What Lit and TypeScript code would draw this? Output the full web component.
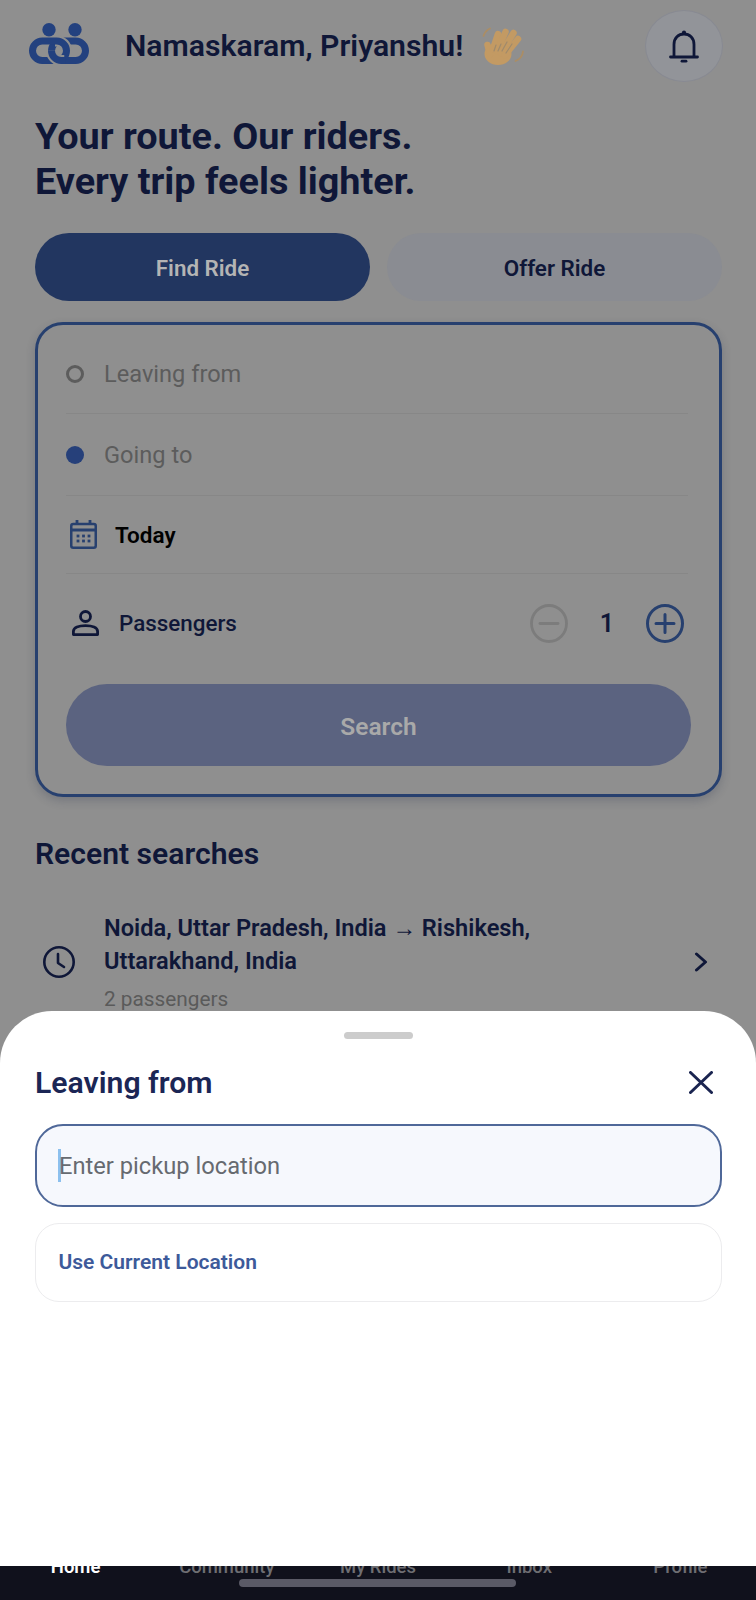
import { LitElement, html, css, svg } from "lit";
import { customElement } from "lit/decorators.js";

const navy = "#0f1738";
const blue = "#27406f";
const logoBlue = "#23417f";
const pageBg = "#8f8f8f";

const logo = html`<svg class="logo" viewBox="0 0 60 41" width="60" height="41" fill="none">
  <circle cx="20" cy="6.700" r="6.700" fill="${logoBlue}" />
  <circle cx="46" cy="6.700" r="6.700" fill="${logoBlue}" />
  <rect x="22.500" y="18" width="34" height="19.500" rx="9.750" stroke="${logoBlue}" stroke-width="7" />
  <path d="M26 18h2a9.750 9.750 0 0 1 9.500 9.750" stroke="${pageBg}" stroke-width="11" />
  <rect x="3.500" y="18" width="34" height="19.500" rx="9.750" stroke="${logoBlue}" stroke-width="7" />
  <path d="M22.500 27.750a9.750 9.750 0 0 0 9.750 9.750h3" stroke="${pageBg}" stroke-width="11" />
  <path d="M22.500 27.750a9.750 9.750 0 0 0 9.750 9.750h4" stroke="${logoBlue}" stroke-width="7" />
</svg>`;

const hand = html`<svg class="hand" viewBox="0 0 42 38" width="42" height="38" fill="none" stroke-linecap="round">
  <ellipse cx="16" cy="27" rx="13.500" ry="11" fill="#c39a63" />
  <g stroke="#c39a63" stroke-width="6.500">
    <path d="M8 27L5.500 18" />
    <path d="M11 22L16 7" />
    <path d="M15 24L23.500 5" />
    <path d="M19 26L31.500 6" />
    <path d="M23 28L36 12" />
  </g>
  <path d="M14 18l-2 6M19 17l-3 7M25 15l-5 9M30 17l-6 9" stroke="#9f8a6c" stroke-width="1.200" />
  <path d="M1.500 9c1-3.500 3.500-6 6.500-7.500M33.500 34c4-1.500 7-5 7.500-9.500" stroke="#ab8d64" stroke-width="1.800" />
</svg>`;

const bell = html`<svg viewBox="0 0 30 33" width="30" height="33" fill="none" stroke="${navy}" stroke-width="2.800" stroke-linejoin="round" stroke-linecap="round">
  <path d="M5 26V14.500C5 8 9.500 4 15 4s10 4 10 10.500V26" />
  <path d="M1.500 27h27" />
  <circle cx="15" cy="2.600" r="1.300" fill="${navy}" stroke-width="1.500" />
  <path d="M13 31.200h4" stroke-width="2.800" />
</svg>`;

const calendar = html`<svg viewBox="0 0 27 29" width="27" height="29" fill="none" stroke="${blue}" stroke-width="2.500">
  <rect x="1.250" y="4" width="24.500" height="23.700" rx="2" />
  <path d="M1.500 10h24" stroke-width="3" />
  <path d="M7 0v5M20 0v5" stroke-width="2.800" />
  ${[16, 21].map((y) =>
    [8, 13.500, 19].map(
      (x) => svg`<rect x=${x - 1.400} y=${y - 1.400} width="2.800" height="2.800" fill=${blue} stroke="none" />`,
    ),
  )}
</svg>`;

const person = html`<svg viewBox="0 0 27 26" width="27" height="26" fill="none" stroke="${navy}" stroke-width="2.800">
  <circle cx="13.500" cy="6.500" r="5" />
  <path d="M1.400 24.600v-3c0-4 5.400-6 12.100-6s12.100 2 12.100 6v3z" stroke-linejoin="round" />
</svg>`;

const minus = html`<svg viewBox="0 0 38 39" width="38" height="39" fill="none" stroke="#7c7c7c" stroke-width="2.800">
  <ellipse cx="19" cy="19.500" rx="17.500" ry="18" />
  <path d="M10 19.500h18" stroke-linecap="round" />
</svg>`;

const plus = html`<svg viewBox="0 0 38 39" width="38" height="39" fill="none" stroke="${blue}" stroke-width="3">
  <ellipse cx="19" cy="19.500" rx="17.500" ry="18" />
  <path d="M10 19.500h18M19 10.500v18" stroke-linecap="round" />
</svg>`;

const clock = html`<svg class="clock" viewBox="0 0 32 32" width="32" height="32" fill="none" stroke="${navy}" stroke-width="2.600" stroke-linecap="round" stroke-linejoin="round">
  <circle cx="16" cy="16" r="14.700" />
  <path d="M15 8v9l6 4" />
</svg>`;

const chevron = html`<svg class="chevron" viewBox="0 0 14 20" width="14" height="20" fill="none" stroke="${navy}" stroke-width="3" stroke-linecap="round" stroke-linejoin="round">
  <path d="M2.500 2l9 8-9 8" />
</svg>`;

const close = html`<svg viewBox="0 0 24 23" width="24" height="23" fill="none" stroke="#1a2450" stroke-width="3" stroke-linecap="round">
  <path d="M1.500 1.500l21 20M22.500 1.500l-21 20" />
</svg>`;

@customElement("app-root")
export class AppRoot extends LitElement {
  static styles = css`
    :host {
      display: block;
      position: relative;
      width: 756px;
      height: 1600px;
      overflow: hidden;
      background: #8f8f8f;
      font-family: Roboto, "Liberation Sans", sans-serif;
      color: #0f1738;
    }

    .header {
      display: flex;
      align-items: center;
      padding: 10px 33px 0 29px;
    }
    .logo {
      margin: -6px 36px 0 0;
      flex: none;
    }
    .greeting {
      font-size: 30.200px;
      font-weight: 600;
      line-height: 36px;
      white-space: nowrap;
    }
    .hand {
      margin-left: 19px;
    }
    .bell {
      margin-left: auto;
      width: 78px;
      height: 72px;
      box-sizing: border-box;
      border-radius: 50%;
      background: #929499;
      border: 1px solid #888a92;
      display: flex;
      align-items: center;
      justify-content: center;
    }

    .main {
      padding: 0 34px 0 35px;
    }
    .headline {
      margin: 32px 0 0;
      font-size: 37.800px;
      font-weight: 700;
      line-height: 45px;
      white-space: nowrap;
    }

    .tabs {
      display: grid;
      grid-template-columns: 1fr 1fr;
      gap: 17px;
      margin-top: 29px;
    }
    .tab {
      height: 68px;
      padding-top: 1px;
      box-sizing: border-box;
      border-radius: 34px;
      display: flex;
      align-items: center;
      justify-content: center;
      font-size: 22.400px;
      font-weight: 600;
    }
    .tab.active {
      background: #223660;
      color: #b4b4b4;
    }
    .tab.idle {
      background: #8a8c92;
      color: #0f1738;
    }

    .card {
      margin-top: 21px;
      height: 475px;
      box-sizing: border-box;
      border: 3px solid #27406f;
      border-radius: 28px;
      padding: 9px 28px 28px;
      box-shadow: 0 4px 10px rgba(30, 40, 70, 0.22);
    }
    .row {
      display: flex;
      align-items: center;
      margin-right: 3px;
      border-bottom: 1px solid #878787;
      box-sizing: border-box;
      font-size: 23.600px;
      color: #5c5c5c;
    }
    .row.from {
      height: 80px;
    }
    .row.to {
      height: 82px;
    }
    .row.date {
      height: 78px;
      padding-left: 4px;
      color: #000;
      font-size: 22.500px;
      font-weight: 600;
    }
    .row.pax {
      height: 98px;
      padding: 0 4px 0 6px;
      border-bottom: none;
      font-size: 22.400px;
      font-weight: 500;
      color: #0f1738;
    }
    .dot {
      width: 18px;
      height: 18px;
      box-sizing: border-box;
      border-radius: 50%;
      margin-right: 20px;
    }
    .dot.ring {
      border: 3.500px solid #5c5c5c;
    }
    .dot.solid {
      background: #26407a;
    }
    .date svg {
      margin-right: 18px;
    }
    .pax .person {
      margin-right: 20px;
      display: flex;
    }
    .stepper {
      margin-left: auto;
      display: flex;
      align-items: center;
    }
    .count {
      width: 78px;
      text-align: center;
      font-size: 25px;
      font-weight: 600;
    }
    .search {
      margin-top: 12px;
      height: 82px;
      padding-top: 2px;
      box-sizing: border-box;
      border-radius: 41px;
      background: #5b6380;
      color: #a9a9a9;
      font-size: 24.500px;
      font-weight: 600;
      display: flex;
      align-items: center;
      justify-content: center;
    }

    .recent-title {
      margin: 39px 0 0;
      font-size: 30.100px;
      font-weight: 600;
      line-height: 36px;
    }
    .recent {
      display: flex;
      align-items: center;
      margin-top: 40px;
      padding: 0 14px 0 8px;
    }
    .recent-text {
      margin-left: 29px;
      width: 470px;
      font-size: 23.600px;
      font-weight: 600;
      line-height: 33px;
    }
    .recent-sub {
      margin-top: 6px;
      font-size: 20.800px;
      font-weight: 400;
      line-height: 30px;
      color: #5a5a5a;
    }
    .chevron {
      margin: 0 0 2px auto;
    }
    .clock {
      margin-bottom: 2px;
    }

    .nav {
      position: absolute;
      left: 0;
      right: 0;
      bottom: 0;
      height: 70px;
      padding-top: 26px;
      box-sizing: border-box;
      background: #10111c;
      display: grid;
      grid-template-columns: repeat(5, 1fr);
      justify-items: center;
      font-size: 18.500px;
      line-height: 22px;
      font-weight: 500;
      color: #6e6e72;
    }
    .nav .on {
      color: #fff;
      font-weight: 600;
    }
    .home-bar {
      position: absolute;
      left: 239px;
      top: 49px;
      width: 277px;
      height: 8px;
      border-radius: 4px;
      background: #5a5a66;
    }

    .sheet {
      position: absolute;
      left: 0;
      right: 0;
      top: 1011px;
      height: 555px;
      box-sizing: border-box;
      padding: 21px 34px 0 35px;
      background: #fff;
      border-radius: 52px 52px 0 0;
    }
    .handle {
      width: 69px;
      height: 7px;
      border-radius: 4px;
      background: #cccccc;
      margin: 0 auto;
    }
    .sheet-head {
      display: flex;
      align-items: center;
      justify-content: space-between;
      margin-top: 25px;
      padding-right: 9px;
      height: 36px;
      font-size: 30.200px;
      font-weight: 600;
      color: #1b2655;
    }
    .input {
      margin-top: 24px;
      height: 83px;
      box-sizing: border-box;
      border: 2.500px solid #4f6899;
      border-radius: 28px;
      background: #f6f8fd;
      padding-left: 21px;
      display: flex;
      align-items: center;
      font-size: 23.700px;
      color: #666a70;
    }
    .caret {
      width: 3px;
      height: 33px;
      background: #8cc0ee;
      margin-right: -2px;
    }
    .current {
      margin-top: 16px;
      height: 79px;
      box-sizing: border-box;
      border: 1.500px solid #ececee;
      border-radius: 24px;
      padding: 0 0 2px 22.500px;
      display: flex;
      align-items: center;
      font-size: 21px;
      font-weight: 600;
      color: #3d5a9a;
    }
  `;

  render() {
    return html`
      <div class="header">
        ${logo}
        <div class="greeting">Namaskaram, Priyanshu!</div>
        ${hand}
        <div class="bell">${bell}</div>
      </div>

      <div class="main">
        <h1 class="headline">Your route. Our riders.<br />Every trip feels lighter.</h1>

        <div class="tabs">
          <div class="tab active">Find Ride</div>
          <div class="tab idle">Offer Ride</div>
        </div>

        <div class="card">
          <div class="row from"><span class="dot ring"></span>Leaving from</div>
          <div class="row to"><span class="dot solid"></span>Going to</div>
          <div class="row date">${calendar}Today</div>
          <div class="row pax">
            <span class="person">${person}</span>Passengers
            <div class="stepper">${minus}<span class="count">1</span>${plus}</div>
          </div>
          <div class="search">Search</div>
        </div>

        <h2 class="recent-title">Recent searches</h2>
        <div class="recent">
          ${clock}
          <div class="recent-text">
            Noida, Uttar Pradesh, India → Rishikesh, Uttarakhand, India
            <div class="recent-sub">2 passengers</div>
          </div>
          ${chevron}
        </div>
      </div>

      <div class="nav">
        <span class="on">Home</span><span>Community</span><span>My Rides</span><span>Inbox</span><span>Profile</span>
        <div class="home-bar"></div>
      </div>

      <div class="sheet">
        <div class="handle"></div>
        <div class="sheet-head">Leaving from ${close}</div>
        <div class="input"><span class="caret"></span>Enter pickup location</div>
        <div class="current">Use Current Location</div>
      </div>
    `;
  }
}
